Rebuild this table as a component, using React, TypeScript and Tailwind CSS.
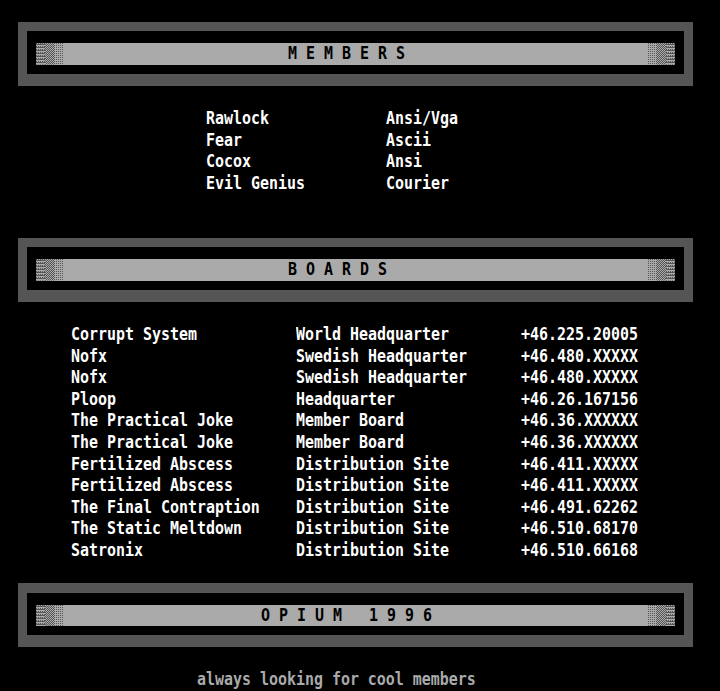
import React from "react";

const ROW = "h-[21.6px] leading-[21.6px]";

function Shade({ id, mirror }: { id: string; mirror?: boolean }) {
  const order = mirror ? ["light", "med", "dark"] : ["dark", "med", "light"];
  return (
    <svg width="27" height="21.6" viewBox="0 0 27 21.6" className="block shrink-0">
      <defs>
        <pattern id={`${id}-light`} width="2" height="2" patternUnits="userSpaceOnUse">
          <rect width="2" height="2" fill="#aaaaaa" />
          <rect x="0" y="0" width="1" height="1" fill="#555555" />
        </pattern>
        <pattern id={`${id}-med`} width="2" height="2" patternUnits="userSpaceOnUse">
          <rect width="2" height="2" fill="#aaaaaa" />
          <rect x="0" y="0" width="1" height="1" fill="#555555" />
          <rect x="1" y="1" width="1" height="1" fill="#555555" />
        </pattern>
        <pattern id={`${id}-dark`} width="2" height="3" patternUnits="userSpaceOnUse">
          <rect width="2" height="3" fill="#aaaaaa" />
          <rect x="0" y="0" width="1" height="2" fill="#555555" />
          <rect x="1" y="1" width="1" height="1" fill="#555555" />
        </pattern>
      </defs>
      {order.map((o, i) => (
        <rect key={o} x={i * 9} y="0" width="9" height="21.6" fill={`url(#${id}-${o})`} />
      ))}
    </svg>
  );
}

function Box({ title, id, wide }: { title: string; id: string; wide?: boolean }) {
  return (
    <div className="h-[64.8px]">
      <div className="ml-[18px] w-[675px] bg-[#555555] pt-[9.5px] pb-[12px] px-[9px]">
        <div className="bg-black pt-[12px] pb-[9px] px-[9px]">
          <div className="flex h-[21.6px] bg-[#aaaaaa]">
            <Shade id={`${id}-a`} />
            <div
              className={`flex-1 ${ROW} whitespace-pre text-black scale-y-[1.15] ${
                wide ? "pl-[198px]" : "pl-[225px]"
              }`}
            >
              {title}
            </div>
            <Shade id={`${id}-b`} mirror />
          </div>
        </div>
      </div>
    </div>
  );
}

const members: [string, string][] = [
  ["Rawlock", "Ansi/Vga"],
  ["Fear", "Ascii"],
  ["Cocox", "Ansi"],
  ["Evil Genius", "Courier"],
];

const boards: [string, string, string][] = [
  ["Corrupt System", "World Headquarter", "+46.225.20005"],
  ["Nofx", "Swedish Headquarter", "+46.480.XXXXX"],
  ["Nofx", "Swedish Headquarter", "+46.480.XXXXX"],
  ["Ploop", "Headquarter", "+46.26.167156"],
  ["The Practical Joke", "Member Board", "+46.36.XXXXXX"],
  ["The Practical Joke", "Member Board", "+46.36.XXXXXX"],
  ["Fertilized Abscess", "Distribution Site", "+46.411.XXXXX"],
  ["Fertilized Abscess", "Distribution Site", "+46.411.XXXXX"],
  ["The Final Contraption", "Distribution Site", "+46.491.62262"],
  ["The Static Meltdown", "Distribution Site", "+46.510.68170"],
  ["Satronix", "Distribution Site", "+46.510.66168"],
];

export default function App() {
  return (
    <div className="w-[720px] h-[691px] overflow-hidden bg-black font-['DejaVu_Sans_Mono','Liberation_Mono',monospace] font-bold text-[14.95px] text-white">
      <div className="h-[21.6px]" />
      <Box title="M E M B E R S" id="m" />
      <div className="h-[21.6px]" />
      <div className="ml-[206px] grid grid-cols-[180px_auto]">
        {members.map(([a, b], i) => (
          <React.Fragment key={i}>
            <div className={`${ROW} whitespace-pre scale-y-[1.15]`}>{a}</div>
            <div className={`${ROW} whitespace-pre scale-y-[1.15]`}>{b}</div>
          </React.Fragment>
        ))}
      </div>
      <div className="h-[43.2px]" />
      <Box title="B O A R D S" id="b" />
      <div className="h-[21.6px]" />
      <div className="ml-[71px] grid grid-cols-[225px_225px_auto]">
        {boards.map(([a, b, c], i) => (
          <React.Fragment key={i}>
            <div className={`${ROW} whitespace-pre scale-y-[1.15]`}>{a}</div>
            <div className={`${ROW} whitespace-pre scale-y-[1.15]`}>{b}</div>
            <div className={`${ROW} whitespace-pre scale-y-[1.15]`}>{c}</div>
          </React.Fragment>
        ))}
      </div>
      <div className="h-[21.6px]" />
      <Box title="O P I U M   1 9 9 6" id="o" wide />
      <div className="h-[21.6px]" />
      <div className={`${ROW} pl-[197px] whitespace-pre text-[#aaaaaa] scale-y-[1.15]`}>
        always looking for cool members
      </div>
    </div>
  );
}
